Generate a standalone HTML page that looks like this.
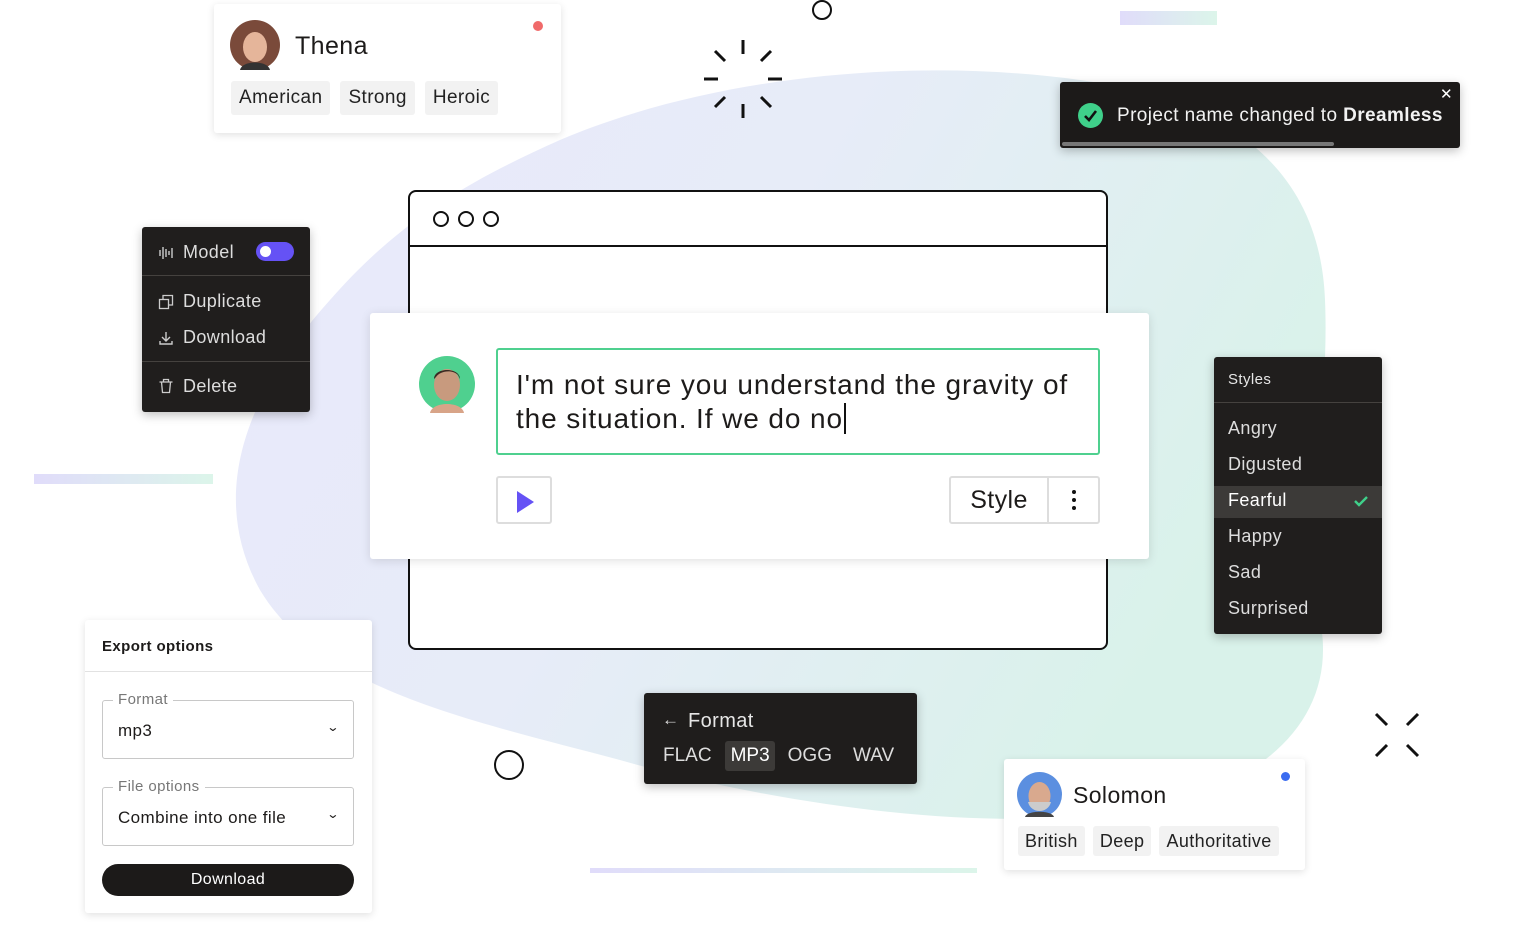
<!DOCTYPE html>
<html><head><meta charset="utf-8"><style>
*{box-sizing:border-box;margin:0;padding:0}
body{width:1530px;height:948px;position:relative;overflow:hidden;background:#fff;font-family:"Liberation Sans",sans-serif;color:#1d1b1a;letter-spacing:0.4px}
.abs{position:absolute}
.card{position:absolute;background:#fff;box-shadow:0 2px 8px rgba(0,0,0,.12);border-radius:3px}
.dark{position:absolute;background:#1f1d1c;color:#e6e6e6;border-radius:3px;box-shadow:0 3px 10px rgba(0,0,0,.25)}
.tag{display:inline-block;background:#f2f2f2;border-radius:3px;padding:0 8px;height:34px;line-height:34px;font-size:19px;margin-right:10px;color:#222}
.bar{position:absolute;height:10px;background:linear-gradient(90deg,#e0dcfa,#dcf5ea)}
.mi{position:absolute;left:0;right:0;font-size:18px;color:#ddd}
</style></head><body>
<svg class="abs" style="left:0;top:0" width="1530" height="948">
<defs><linearGradient id="g" x1="0" y1="0" x2="1" y2="0.4"><stop offset="0" stop-color="#e8e8fb"/><stop offset="0.5" stop-color="#e7ecf8"/><stop offset="1" stop-color="#d9f2ea"/></linearGradient></defs>
<path d="M560 140 C700 80 900 55 1080 80 C1230 100 1320 170 1325 300 C1330 420 1300 520 1320 620 C1340 720 1260 800 1100 815 C950 830 760 800 620 760 C470 720 320 690 260 590 C210 500 240 400 330 300 C400 220 470 180 560 140 Z" fill="url(#g)"/>
<circle cx="822" cy="10" r="9" fill="none" stroke="#111" stroke-width="2"/>
<circle cx="509" cy="765" r="14" fill="none" stroke="#111" stroke-width="2"/>
<g stroke="#111" stroke-width="3">
<line x1="743" y1="40" x2="743" y2="54"/><line x1="743" y1="104" x2="743" y2="118"/>
<line x1="704" y1="79" x2="718" y2="79"/><line x1="768" y1="79" x2="782" y2="79"/>
<line x1="715" y1="51" x2="725" y2="61"/><line x1="761" y1="97" x2="771" y2="107"/>
<line x1="771" y1="51" x2="761" y2="61"/><line x1="725" y1="97" x2="715" y2="107"/>
<line x1="1376" y1="714" x2="1387" y2="725"/><line x1="1418" y1="714" x2="1407" y2="725"/>
<line x1="1376" y1="756" x2="1387" y2="745"/><line x1="1418" y1="756" x2="1407" y2="745"/>
</g>
</svg>
<div class="bar" style="left:1120px;top:11px;width:97px;height:14px"></div>
<div class="bar" style="left:34px;top:474px;width:179px"></div>
<div class="bar" style="left:590px;top:868px;width:387px;height:5px"></div>

<div class="abs" style="left:408px;top:190px;width:700px;height:460px;border:2px solid #111;border-radius:8px;background:#fff">
<div style="height:55px;border-bottom:2px solid #111;position:relative">
<svg class="abs" style="left:20px;top:16px" width="80" height="22"><g fill="none" stroke="#111" stroke-width="2"><circle cx="11" cy="11" r="7"/><circle cx="36" cy="11" r="7"/><circle cx="61" cy="11" r="7"/></g></svg>
</div></div>

<div class="card" style="left:370px;top:313px;width:779px;height:246px;box-shadow:0 2px 10px rgba(0,0,0,.12)">
<svg class="abs" style="left:48px;top:42px" width="58" height="58"><circle cx="29" cy="29" r="28" fill="#4fd08f"/><ellipse cx="29" cy="30" rx="13" ry="16" fill="#c89a7e"/><path d="M16 24 C16 12 42 12 42 24 L40 20 C34 14 22 16 18 22Z" fill="#3a2a22"/><path d="M12 58 C14 46 44 46 46 58Z" fill="#d8a488"/></svg>
<div class="abs" style="left:126px;top:35px;width:604px;height:107px;border:2px solid #4fd08f;border-radius:3px;padding:18px 18px;font-size:28px;line-height:34px;color:#1d1b1a;letter-spacing:0.9px;white-space:nowrap">I'm not sure you understand the gravity of<br>the situation. If we do no<span style="border-left:2px solid #111;margin-left:1px"></span></div>
<div class="abs" style="left:126px;top:163px;width:56px;height:48px;border:2px solid #ddd;border-radius:3px"><svg class="abs" style="left:18px;top:12px" width="20" height="24"><path d="M1 1 L18 12 L1 23Z" fill="#6552f5"/></svg></div>
<div class="abs" style="left:579px;top:163px;width:151px;height:48px;border:2px solid #ddd;border-radius:3px;display:flex"><div style="width:98px;border-right:2px solid #ddd;text-align:center;font-size:25px;line-height:44px">Style</div><div style="flex:1;position:relative"><div style="position:absolute;left:23px;top:12px;width:4px;height:4px;border-radius:2px;background:#111;box-shadow:0 8px 0 #111,0 16px 0 #111"></div></div></div>
</div>

<div class="card" style="left:214px;top:4px;width:347px;height:129px">
<svg class="abs" style="left:16px;top:16px" width="50" height="50"><circle cx="25" cy="25" r="25" fill="#7a4a3a"/><ellipse cx="25" cy="27" rx="12" ry="15" fill="#e5b59a"/><path d="M10 50 C12 40 38 40 40 50Z" fill="#333"/></svg>
<div class="abs" style="left:81px;top:28px;font-size:25px">Thena</div>
<div class="abs" style="left:319px;top:17px;width:10px;height:10px;border-radius:5px;background:#f06a6a"></div>
<div class="abs" style="left:17px;top:77px;white-space:nowrap"><span class="tag">American</span><span class="tag">Strong</span><span class="tag">Heroic</span></div>
</div>

<div class="dark" style="left:1060px;top:82px;width:400px;height:66px;background:#1c1a19">
<div class="abs" style="left:18px;top:21px;width:25px;height:25px;border-radius:13px;background:#3fd08a"><svg class="abs" style="left:5px;top:6px" width="15" height="13"><path d="M2 7 L6 11 L13 2" fill="none" stroke="#111" stroke-width="2.6"/></svg></div>
<div class="abs" style="left:57px;top:23px;font-size:19px;color:#f2f2f2;white-space:nowrap">Project name changed to <b>Dreamless</b></div>
<div class="abs" style="left:380px;top:3px;font-size:15px;color:#fff">✕</div>
<div class="abs" style="left:2px;bottom:2px;width:272px;height:4px;background:#777;border-radius:2px"></div>
</div>

<div class="dark" style="left:142px;top:227px;width:168px;height:185px;background:#201e1d">
<svg class="abs" style="left:16px;top:18px" width="16" height="16"><g stroke="#ccc" stroke-width="1.4"><line x1="2" y1="5" x2="2" y2="11"/><line x1="5" y1="2" x2="5" y2="14"/><line x1="8" y1="4" x2="8" y2="12"/><line x1="11" y1="6" x2="11" y2="10"/><line x1="14" y1="3" x2="14" y2="13"/></g></svg>
<div class="mi" style="left:41px;top:15px">Model</div>
<div class="abs" style="left:114px;top:15px;width:38px;height:19px;border-radius:10px;background:#6552f5"><div class="abs" style="left:4px;top:4px;width:11px;height:11px;border-radius:6px;background:#fff"></div></div>
<div class="abs" style="left:0;right:0;top:48px;border-top:1px solid #45423f"></div>
<svg class="abs" style="left:16px;top:67px" width="16" height="16"><g fill="none" stroke="#ccc" stroke-width="1.3"><rect x="1.5" y="5.5" width="9" height="9"/><path d="M5 5 V1.5 H14.5 V11 H11"/></g></svg>
<div class="mi" style="left:41px;top:64px">Duplicate</div>
<svg class="abs" style="left:16px;top:103px" width="16" height="16"><g fill="none" stroke="#ccc" stroke-width="1.4"><path d="M8 2 V11 M4 7 L8 11 L12 7 M2 11 V14 H14 V11"/></g></svg>
<div class="mi" style="left:41px;top:100px">Download</div>
<div class="abs" style="left:0;right:0;top:134px;border-top:1px solid #45423f"></div>
<svg class="abs" style="left:16px;top:151px" width="16" height="16"><g fill="none" stroke="#ccc" stroke-width="1.3"><path d="M1.5 4 H14.5 M5.5 4 V1.5 H10.5 V4 M3.5 4 L4.5 14.5 H11.5 L12.5 4"/></g></svg>
<div class="mi" style="left:41px;top:149px">Delete</div>
</div>

<div class="dark" style="left:1214px;top:357px;width:168px;height:277px;background:#201e1d">
<div class="abs" style="left:14px;top:14px;font-size:15px;color:#e6e6e6">Styles</div>
<div class="abs" style="left:0;right:0;top:45px;border-top:1px solid #45423f"></div>
<div class="mi" style="left:14px;top:61px">Angry</div>
<div class="mi" style="left:14px;top:97px">Digusted</div>
<div class="abs" style="left:0;right:0;top:129px;height:32px;background:#3c3a38"></div>
<div class="mi" style="left:14px;top:133px;color:#fff">Fearful</div>
<svg class="abs" style="left:140px;top:138px" width="14" height="12"><path d="M1 6 L5 10 L13 2" fill="none" stroke="#3fd08a" stroke-width="2.4"/></svg>
<div class="mi" style="left:14px;top:169px">Happy</div>
<div class="mi" style="left:14px;top:205px">Sad</div>
<div class="mi" style="left:14px;top:241px">Surprised</div>
</div>

<div class="dark" style="left:644px;top:693px;width:273px;height:91px;background:#1f1d1c">
<div class="abs" style="left:18px;top:17px;font-size:17px;color:#ddd">←</div>
<div class="abs" style="left:44px;top:17px;font-size:20px;color:#e6e6e6">Format</div>
<div class="abs" style="left:81px;top:48px;width:50px;height:30px;background:#3c3a38;border-radius:3px"></div>
<div class="abs" style="left:19px;top:52px;font-size:19px;color:#ddd;white-space:nowrap;letter-spacing:0"><span>FLAC</span><span style="margin-left:19px;color:#fff">MP3</span><span style="margin-left:18px">OGG</span><span style="margin-left:21px">WAV</span></div>
</div>

<div class="card" style="left:1004px;top:759px;width:301px;height:111px">
<svg class="abs" style="left:13px;top:13px" width="45" height="45"><circle cx="22.5" cy="22.5" r="22.5" fill="#5b8fe0"/><ellipse cx="22.5" cy="24" rx="11" ry="14" fill="#d9a98e"/><path d="M11 30 C14 42 31 42 34 30Z" fill="#ccc"/><path d="M8 45 C10 38 35 38 37 45Z" fill="#444"/></svg>
<div class="abs" style="left:69px;top:23px;font-size:23px">Solomon</div>
<div class="abs" style="left:277px;top:13px;width:9px;height:9px;border-radius:5px;background:#3b6cf0"></div>
<div class="abs" style="left:14px;top:67px;white-space:nowrap"><span class="tag" style="height:30px;line-height:30px;font-size:18px;padding:0 7px;margin-right:8px">British</span><span class="tag" style="height:30px;line-height:30px;font-size:18px;padding:0 7px;margin-right:8px">Deep</span><span class="tag" style="height:30px;line-height:30px;font-size:18px;padding:0 7px">Authoritative</span></div>
</div>

<div class="card" style="left:85px;top:620px;width:287px;height:293px">
<div class="abs" style="left:17px;top:18px;font-size:15px;font-weight:bold">Export options</div>
<div class="abs" style="left:0;right:0;top:51px;border-top:1px solid #e2e2e2"></div>
<div class="abs" style="left:17px;top:80px;width:252px;height:59px;border:1px solid #c8c8c8;border-radius:3px"></div>
<div class="abs" style="left:28px;top:71px;background:#fff;padding:0 5px;font-size:15px;color:#777">Format</div>
<div class="abs" style="left:33px;top:101px;font-size:17px">mp3</div>
<div class="abs" style="left:243px;top:100px;font-size:12px;transform:scaleX(1.3)">⌄</div>
<div class="abs" style="left:17px;top:167px;width:252px;height:59px;border:1px solid #c8c8c8;border-radius:3px"></div>
<div class="abs" style="left:28px;top:158px;background:#fff;padding:0 5px;font-size:15px;color:#777">File options</div>
<div class="abs" style="left:33px;top:188px;font-size:17px">Combine into one file</div>
<div class="abs" style="left:243px;top:187px;font-size:12px;transform:scaleX(1.3)">⌄</div>
<div class="abs" style="left:17px;top:244px;width:252px;height:32px;border-radius:16px;background:#1c1a19;color:#fff;text-align:center;line-height:32px;font-size:16px">Download</div>
</div>
</body></html>
